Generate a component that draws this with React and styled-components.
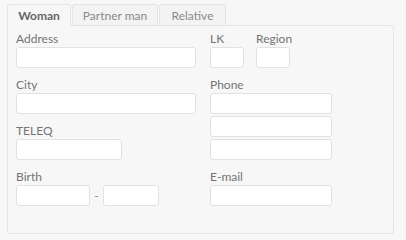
import React from "react"
import styled, { createGlobalStyle } from "styled-components"

const GlobalStyle = createGlobalStyle`
  body {
    margin: 0;
    background: #f7f7f7;
    font-family: "Lato", "Open Sans", sans-serif;
    font-size: 12px;
    color: #747474;
  }
`

const Page = styled.div`
  padding: 4px 7px 0;
`

const TabBar = styled.div`
  display: flex;
  gap: 1px;
  position: relative;
  z-index: 1;
`

const Tab = styled.div`
  width: ${props => props.width}px;
  box-sizing: border-box;
  display: flex;
  align-items: center;
  justify-content: center;
  padding-top: 1px;
  border: 1px solid #e4e4e4;
  border-bottom: ${props => (props.active ? "1px solid #f7f7f7" : "none")};
  border-radius: 3px 3px 0 0;
  background: ${props => (props.active ? "#f7f7f7" : "#f3f3f3")};
  color: ${props => (props.active ? "#666" : "#8a8a8a")};
  font-weight: ${props => (props.active ? "bold" : "normal")};
  margin-bottom: ${props => (props.active ? "-1px" : "0")};
  height: ${props => (props.active ? "22px" : "21px")};
`

const Panel = styled.div`
  width: 387px;
  height: 209px;
  box-sizing: border-box;
  border: 1px solid #e4e4e4;
  border-radius: 0 3px 3px 3px;
  padding: 7px 8px;
  display: grid;
  grid-template-columns: 180px 1fr;
  column-gap: 14px;
  align-items: start;
`

const Column = styled.div`
  display: flex;
  flex-direction: column;
  gap: 11px;
`

const Field = styled.div`
  display: flex;
  flex-direction: column;
`

const Label = styled.div`
  height: 14px;
  line-height: 12px;
`

const Input = styled.div`
  width: ${props => props.width}px;
  height: 21px;
  box-sizing: border-box;
  background: #fff;
  border: 1px solid #e2e2e2;
  border-radius: 3px;
`

const Row = styled.div`
  display: flex;
  align-items: ${props => props.align || "flex-start"};
  gap: ${props => props.gap}px;
`

const Stack = styled.div`
  display: flex;
  flex-direction: column;
  gap: 2px;
`

const Dash = styled.span`
  width: 13px;
  text-align: center;
  color: #888;
`

export default function App() {
  return (
    <Page>
      <GlobalStyle />
      <TabBar>
        <Tab active width={64}>Woman</Tab>
        <Tab width={86}>Partner man</Tab>
        <Tab width={67}>Relative</Tab>
      </TabBar>
      <Panel>
        <Column>
          <Field>
            <Label>Address</Label>
            <Input width={180} />
          </Field>
          <Field>
            <Label>City</Label>
            <Input width={180} />
          </Field>
          <Field>
            <Label>TELEQ</Label>
            <Input width={106} />
          </Field>
          <Field>
            <Label>Birth</Label>
            <Row align="center" gap={0}>
              <Input width={74} />
              <Dash>-</Dash>
              <Input width={56} />
            </Row>
          </Field>
        </Column>
        <Column>
          <Row gap={12}>
            <Field>
              <Label>LK</Label>
              <Input width={34} />
            </Field>
            <Field>
              <Label>Region</Label>
              <Input width={34} />
            </Field>
          </Row>
          <Field>
            <Label>Phone</Label>
            <Stack>
              <Input width={122} />
              <Input width={122} />
              <Input width={122} />
            </Stack>
          </Field>
          <Field>
            <Label>E-mail</Label>
            <Input width={122} />
          </Field>
        </Column>
      </Panel>
    </Page>
  )
}
